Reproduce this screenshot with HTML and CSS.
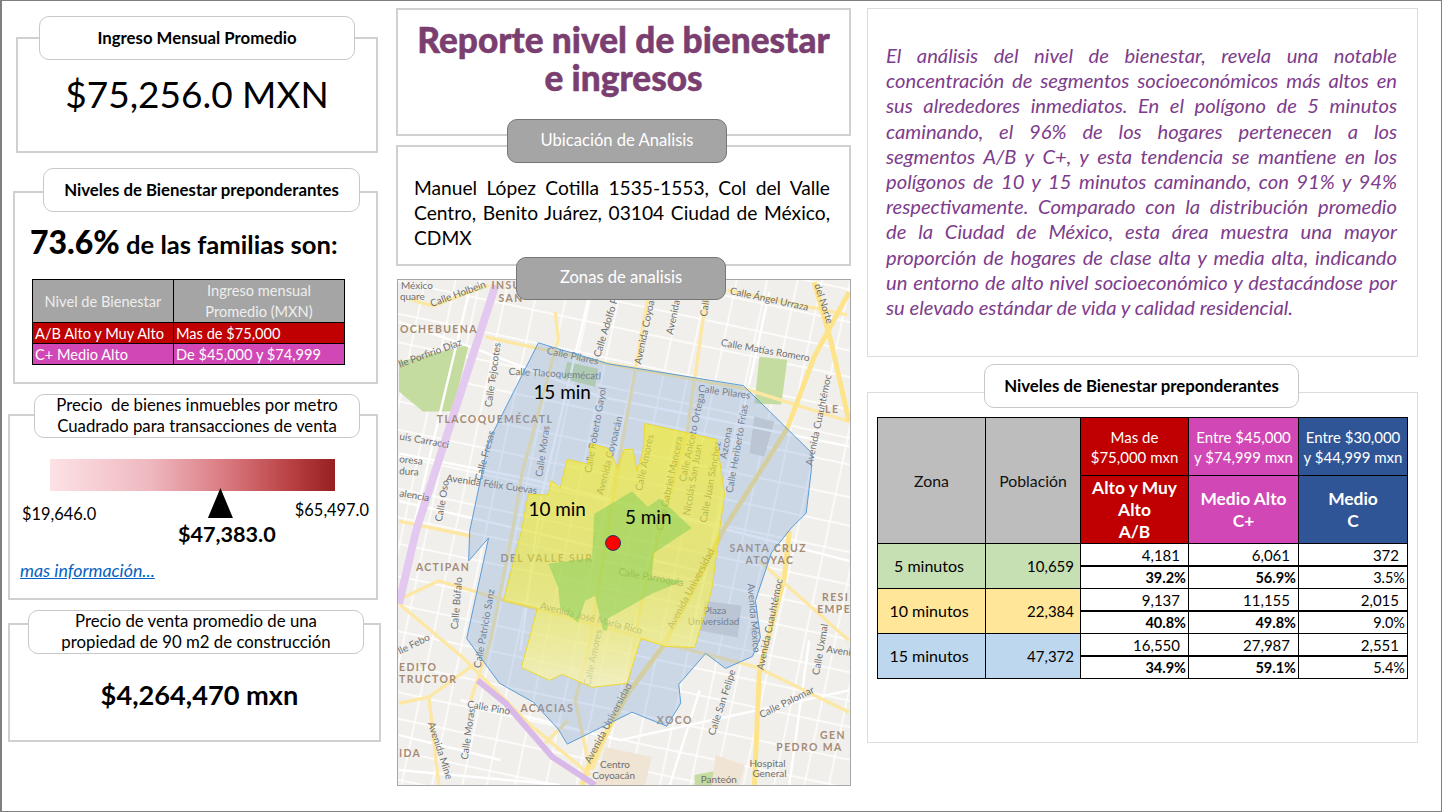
FILE: index.html
```html
<!DOCTYPE html>
<html lang="es">
  <head>
    <meta charset="UTF-8" />
    <title>Reporte nivel de bienestar e ingresos</title>
    <link rel="stylesheet" href="styles.css">
  </head>
  <body>
    <main class="slide">
      <!-- Columna izquierda -->
      <section class="col col-left">
        <div class="panel panel-income">
          <h2 class="pill pill-income">Ingreso Mensual Promedio</h2>
          <p class="income-value">$75,256.0 MXN</p>
        </div>

        <div class="panel panel-levels">
          <h2 class="pill pill-levels">Niveles de Bienestar preponderantes</h2>
          <p class="families"><strong>73.6%</strong> de las familias son:</p>
          <table class="rank-table">
            <tr class="rank-head">
              <th>Nivel de Bienestar</th>
              <th>Ingreso mensual<br>Promedio (MXN)</th>
            </tr>
            <tr class="rank-ab">
              <td>A/B Alto y Muy Alto</td>
              <td>Mas de $75,000</td>
            </tr>
            <tr class="rank-c">
              <td>C+ Medio Alto</td>
              <td>De $45,000 y $74,999</td>
            </tr>
          </table>
        </div>

        <div class="panel panel-scale">
          <h2 class="pill pill-scale pill-plain">Precio &nbsp;de bienes inmuebles por metro<br>Cuadrado para transacciones de venta</h2>
          <div class="scale-bar"></div>
          <div class="scale-labels">
            <span class="scale-min">$19,646.0</span>
            <div class="scale-mid">
              <div class="scale-arrow"></div>
              <strong class="scale-value">$47,383.0</strong>
            </div>
            <span class="scale-max">$65,497.0</span>
          </div>
          <a class="more-link" href="#">mas información...</a>
        </div>

        <div class="panel panel-price">
          <h2 class="pill pill-price pill-plain">Precio de venta promedio de una<br>propiedad de 90 m2 de construcción</h2>
          <p class="price-value">$4,264,470 mxn</p>
        </div>
      </section>

      <!-- Columna central -->
      <section class="col col-center">
        <div class="panel panel-title">
          <h1>Reporte nivel de bienestar<br>e ingresos</h1>
        </div>

        <div class="panel panel-address">
          <h2 class="pill pill-dark pill-location">Ubicación de Analisis</h2>
          <p class="address">
            <span class="line">Manuel López Cotilla 1535-1553, Col del Valle</span>
            <span class="line">Centro, Benito Juárez, 03104 Ciudad de México,</span>
            <span class="line line-last">CDMX</span>
          </p>
        </div>

        <div class="map-block">
          <h2 class="pill pill-dark pill-zones">Zonas de analisis</h2>
          <svg class="map" viewBox="397 278 454 507" width="454" height="507" role="img" aria-label="Mapa de zonas de analisis">
            <defs>
              <pattern id="streets" width="112" height="86" patternUnits="userSpaceOnUse" patternTransform="rotate(12 600 500)">
                <path class="street-grid" d="M0 14H112M0 42H112M0 68H112M16 0V86M46 0V86M76 0V86M100 0V86" />
              </pattern>
              <linearGradient id="yellowFade" x1="0" y1="0" x2="0" y2="1">
                <stop offset="0" stop-color="#fff200" stop-opacity="0.55" />
                <stop offset="0.55" stop-color="#fff200" stop-opacity="0.45" />
                <stop offset="1" stop-color="#fff8b0" stop-opacity="0.7" />
              </linearGradient>
            </defs>

            <rect class="map-base" x="397" y="278" width="454" height="507" />
            <rect fill="url(#streets)" x="397" y="278" width="454" height="507" />

            <!-- parques y manzanas -->
            <polygon class="park" points="398,360 468,343 452,410 422,410 398,390" />
            <polygon class="park" points="760,355 788,358 782,403 755,402" />
            <polygon class="park" points="567,360 598,367 595,385 563,377" />
            <polygon class="park" points="695,775 720,770 725,785 695,785" />
            <polygon class="block" points="705,600 742,605 738,637 700,630" />
            <polygon class="block" points="755,415 775,420 765,455 750,452" />
            <polygon class="beige" points="605,747 652,757 645,785 595,785" />
            <polygon class="beige" points="716,755 745,765 740,785 712,785" />

            <!-- calles blancas -->
            <path class="road-white" d="M398 320 470 345 600 395 850 445M398 452 530 478 850 560M398 500 700 570M470 283 430 450 405 560M590 290 540 500 520 650M770 290 735 450 690 640M810 640 790 785M460 700 620 740 850 690M398 770 560 785M700 690 670 785M398 735 500 760" />

            <!-- vias principales -->
            <path class="road" d="M408 297 432 304 488 283M728 288 848 313M485 335 608 362 745 387 850 420" />
            <path class="road" d="M555 310 558 337 522 470 512 530 490 640 470 700" />
            <path class="road" d="M650 285 618 466 590 640 575 700 590 770" />
            <path class="road" d="M708 285 688 427 642 597 628 683 592 770" />
            <path class="road road-wide" d="M850 290 815 355 788 427 725 527 665 643 628 693 588 767 582 785" />
            <path class="road road-wide" d="M815 280 832 340 850 420" />
            <path class="road road-wide" d="M790 530 785 577 760 670 755 785" />
            <path class="road" d="M402 597 438 580 505 600 642 637 758 667 850 712" />
            <path class="road" d="M398 603 462 657 495 690 530 725 590 775" />
            <path class="road" d="M398 703 428 697 475 663M428 697 438 785M545 743 568 720M398 520 470 535" />
            <path class="road" d="M760 560 850 640" />
            <path class="road-purple" d="M495 283 415 530 398 603" />
            <path class="road-purple road-purple-thin" d="M477 680 505 703 552 757 595 785" />

            <!-- nombres del mapa -->
            <g class="map-street">
              <text x="400" y="287">México</text>
              <text x="399" y="298">quare</text>
              <text x="431" y="305" transform="rotate(-20 431 305)">Calle Holbein</text>
              <text x="399" y="366" transform="rotate(-20 399 366)">lle Porfirio Díaz</text>
              <text x="491" y="406" transform="rotate(-82 491 406)">Calle Tejocotes</text>
              <text x="600" y="356" transform="rotate(-73 600 356)">Calle Adolfo Pr</text>
              <text x="641" y="363" transform="rotate(-78 641 363)">Avenida Coyoacán</text>
              <text x="673" y="333" transform="rotate(-78 673 333)">Avenida</text>
              <text x="707" y="315" transform="rotate(-80 707 315)">Calle</text>
              <text x="508" y="373" transform="rotate(3 508 373)">Calle Tlacoquemécatl</text>
              <text x="546" y="352" transform="rotate(12 546 352)">Calle Pilares</text>
              <text x="698" y="390" transform="rotate(8 698 390)">Calle Pilares</text>
              <text x="721" y="344" transform="rotate(10 721 344)">Calle Matías Romero</text>
              <text x="730" y="292" transform="rotate(12 730 292)">Calle Ángel Urraza</text>
              <text x="815" y="283" transform="rotate(72 815 283)">del Norte</text>
              <text x="813" y="465" transform="rotate(-78 813 465)">Avenida Cuauhtémoc</text>
              <text x="398" y="438" transform="rotate(10 398 438)">uis Carracci</text>
              <text x="398" y="461" transform="rotate(6 398 461)">oresa</text>
              <text x="398" y="473" transform="rotate(4 398 473)">dura</text>
              <text x="398" y="495" transform="rotate(10 398 495)">alencia</text>
              <text x="445" y="480" transform="rotate(8 445 480)">Avenida Félix Cuevas</text>
              <text x="441" y="521" transform="rotate(-80 441 521)">Calle Oso</text>
              <text x="481" y="480" transform="rotate(-75 481 480)">Calle Fresas</text>
              <text x="542" y="476" transform="rotate(-82 542 476)">Calle Moras</text>
              <text x="591" y="472" transform="rotate(-80 591 472)">Calle Roberto Gayol</text>
              <text x="603" y="494" transform="rotate(-76 603 494)">Avenida Coyoacán</text>
              <text x="642" y="490" transform="rotate(-78 642 490)">Calle Amores</text>
              <text x="663" y="530" transform="rotate(-78 663 530)">Calle Gabriel Mancera</text>
              <text x="686" y="481" transform="rotate(-78 686 481)">Calle Aniceto Ortega</text>
              <text x="690" y="515" transform="rotate(-80 690 515)">Nicolás San Juan</text>
              <text x="707" y="522" transform="rotate(-80 707 522)">Calle Juan Sánchez</text>
              <text x="727" y="458" transform="rotate(-80 727 458)">Azcona</text>
              <text x="733" y="492" transform="rotate(-80 733 492)">Calle Heriberto Frías</text>
              <text x="457" y="629" transform="rotate(-85 457 629)">Calle Búfalo</text>
              <text x="480" y="668" transform="rotate(-80 480 668)">Calle Patricio Sanz</text>
              <text x="539" y="608" transform="rotate(14 539 608)">Avenida José María Rico</text>
              <text x="618" y="574" transform="rotate(10 618 574)">Calle Parroquia</text>
              <text x="673" y="629" transform="rotate(-62 673 629)">Avenida Universidad</text>
              <text x="748" y="583" transform="rotate(85 748 583)">Avenida México</text>
              <text x="704" y="613">Plaza</text>
              <text x="688" y="624">Universidad</text>
              <text x="764" y="670" transform="rotate(-78 764 670)">Avenida Cuauhtémoc</text>
              <text x="399" y="654" transform="rotate(-26 399 654)">lle Febo</text>
              <text x="466" y="707" transform="rotate(10 466 707)">Calle Pino</text>
              <text x="467" y="760" transform="rotate(-82 467 760)">Calle Moras</text>
              <text x="590" y="764" transform="rotate(-62 590 764)">Avenida Universidad</text>
              <text x="590" y="686" transform="rotate(-78 590 686)">Calle Amores</text>
              <text x="715" y="736" transform="rotate(-72 715 736)">Calle San Felipe</text>
              <text x="762" y="718" transform="rotate(-26 762 718)">Calle Palomar</text>
              <text x="820" y="675" transform="rotate(-80 820 675)">Calle Uxmal</text>
              <text x="827" y="652" transform="rotate(8 827 652)">Aveni</text>
              <text x="427" y="723" transform="rotate(72 427 723)">Avenida Mine</text>
              <text x="600" y="768">Centro</text>
              <text x="592" y="779">Coyoacán</text>
              <text x="701" y="783">Panteón</text>
              <text x="750" y="767">Hospital</text>
              <text x="753" y="777">General</text>
            </g>
            <g class="map-hood">
              <text x="491" y="287">INSU</text>
              <text x="498" y="300">SAN</text>
              <text x="399" y="331">OCHEBUENA</text>
              <text x="436" y="422">TLACOQUEMÉCATL</text>
              <text x="500" y="561">DEL VALLE SUR</text>
              <text x="415" y="570">ACTIPAN</text>
              <text x="730" y="551">SANTA CRUZ</text>
              <text x="746" y="563">ATOYAC</text>
              <text x="823" y="600">RESI</text>
              <text x="818" y="612">EMPE</text>
              <text x="398" y="671">EDITO</text>
              <text x="398" y="683">TRUCTOR</text>
              <text x="520" y="712">ACACIAS</text>
              <text x="657" y="724">XOCO</text>
              <text x="821" y="739">GEN</text>
              <text x="777" y="751">PEDRO MA</text>
              <text x="398" y="757">IDA</text>
              <text x="826" y="411">LE</text>
            </g>

            <!-- poligonos de caminata -->
            <polygon class="zone-15" points="538,341 608,362 744,384 813,452 812,470 807,512 792,527 772,552 756,600 761,637 753,656 726,668 706,653 679,684 681,703 667,726 632,712 567,744 558,729 533,702 499,683 466,638 488,537 468,560 469,530 488,440" />
            <polygon class="zone-10" points="645,422 717,438 725,493 720,530 712,590 695,647 666,646 641,638 627,683 592,687 562,674 549,680 521,667 537,608 503,600 521,530 528,493 548,494 551,479 560,487 567,458 588,463 591,442 608,447 618,467 624,448 633,448 637,470 643,450" />
            <polygon class="zone-5" points="632,490 648,506 660,497 692,527 654,552 652,577 684,580 652,593 608,618 607,630 603,630 595,595 585,600 578,622 560,608 558,587 548,563 592,557 594,513" />

            <circle class="map-point" cx="613" cy="542" r="7.5" />
            <text class="map-zone" x="533" y="397">15 min</text>
            <text class="map-zone" x="528" y="515">10 min</text>
            <text class="map-zone" x="625" y="523">5 min</text>
          </svg>
        </div>
      </section>

      <!-- Columna derecha -->
      <section class="col col-right">
        <div class="panel panel-text">
          <p class="analysis">
            <span class="line">El análisis del nivel de bienestar, revela una notable</span>
            <span class="line">concentración de segmentos socioeconómicos más altos en</span>
            <span class="line">sus alrededores inmediatos. En el polígono de 5 minutos</span>
            <span class="line">caminando, el 96% de los hogares pertenecen a los</span>
            <span class="line">segmentos A/B y C+, y esta tendencia se mantiene en los</span>
            <span class="line">polígonos de 10 y 15 minutos caminando, con 91% y 94%</span>
            <span class="line">respectivamente. Comparado con la distribución promedio</span>
            <span class="line">de la Ciudad de México, esta área muestra una mayor</span>
            <span class="line">proporción de hogares de clase alta y media alta, indicando</span>
            <span class="line">un entorno de alto nivel socioeconómico y destacándose por</span>
            <span class="line line-last">su elevado estándar de vida y calidad residencial.</span>
          </p>
        </div>

        <div class="panel panel-zones">
          <h2 class="pill pill-zone-table">Niveles de Bienestar preponderantes</h2>
          <table class="zone-table">
            <colgroup>
              <col class="c-zone" /><col class="c-pop" /><col class="c-val" /><col class="c-val2" /><col class="c-val3" />
            </colgroup>
            <tr class="head-price">
              <th class="h-gray" rowspan="2">Zona</th>
              <th class="h-gray" rowspan="2">Población</th>
              <th class="h-red">Mas de<br>$75,000 mxn</th>
              <th class="h-pink">Entre $45,000<br>y $74,999 mxn</th>
              <th class="h-blue">Entre $30,000<br>y $44,999 mxn</th>
            </tr>
            <tr class="head-name">
              <th class="h-red">Alto y Muy<br>Alto<br>A/B</th>
              <th class="h-pink">Medio Alto<br>C+</th>
              <th class="h-blue">Medio<br>C</th>
            </tr>
            <tr class="count">
              <td class="zone z5" rowspan="2">5 minutos</td>
              <td class="pop z5" rowspan="2">10,659</td>
              <td>4,181</td><td>6,061</td><td>372</td>
            </tr>
            <tr class="pct"><td><b>39.2%</b></td><td><b>56.9%</b></td><td>3.5%</td></tr>
            <tr class="count">
              <td class="zone z10" rowspan="2">10 minutos</td>
              <td class="pop z10" rowspan="2">22,384</td>
              <td>9,137</td><td>11,155</td><td>2,015</td>
            </tr>
            <tr class="pct"><td><b>40.8%</b></td><td><b>49.8%</b></td><td>9.0%</td></tr>
            <tr class="count">
              <td class="zone z15" rowspan="2">15 minutos</td>
              <td class="pop z15" rowspan="2">47,372</td>
              <td>16,550</td><td>27,987</td><td>2,551</td>
            </tr>
            <tr class="pct"><td><b>34.9%</b></td><td><b>59.1%</b></td><td>5.4%</td></tr>
          </table>
        </div>
      </section>
    </main>
  </body>
</html>
```

FILE: styles.css
```css
* {
  box-sizing: border-box;
}

body {
  margin: 0;
  background: #fff;
  font-family: "Lato", "Liberation Sans", sans-serif;
  color: #000;
}

h1, h2, p {
  margin: 0;
}

.slide {
  display: flex;
  width: 1442px;
  height: 812px;
  border: 1px solid #7f7f7f;
  border-left-width: 2px;
  overflow: hidden;
}

.col {
  display: flex;
  flex-direction: column;
}

.col-left {
  width: 378px;
  margin-left: 6px;
  padding-top: 36px;
}

.col-center {
  width: 455px;
  margin-left: 10px;
  padding-top: 7px;
}

.col-right {
  width: 552px;
  margin-left: 16px;
  padding-top: 7px;
}

.panel {
  border: 2px solid #d0d0d0;
  background: #fff;
}

/* Lineas justificadas como en el original */
.line {
  display: block;
  white-space: nowrap;
  text-align: justify;
  text-align-last: justify;
}

.line-last {
  text-align-last: left;
}

/* Etiquetas redondeadas */
.pill {
  position: relative;
  z-index: 1;
  display: flex;
  align-items: center;
  justify-content: center;
  height: 44px;
  padding-bottom: 2px;
  text-align: center;
  font-size: 16.8px;
  font-weight: 700;
  line-height: 21px;
  background: #fff;
  border: 1.5px solid #c8c8c8;
  border-radius: 10px;
}

.pill-plain {
  font-weight: 400;
  font-size: 16.8px;
}

.pill-dark {
  font-size: 16.6px;
  font-weight: 400;
  color: #fff;
  background: #a5a5a5;
  border-color: #767676;
}

/* Ingreso */
.panel-income {
  width: 362px;
  height: 116px;
  margin-left: 8px;
}

.pill-income {
  width: 316px;
  margin: -23px 0 0 21px;
}

.income-value {
  margin-top: 9px;
  text-align: center;
  font-size: 37px;
  line-height: 50px;
}

/* Niveles */
.panel-levels {
  width: 365px;
  height: 193px;
  margin: 38px 0 0 5px;
}

.pill-levels {
  width: 317px;
  margin: -25px 0 0 28px;
}

.families {
  margin: 11px 0 0 15px;
  font-size: 25.6px;
  font-weight: 700;
  line-height: 38px;
}

.families strong {
  font-size: 32px;
}

.rank-table {
  width: 313px;
  margin: 16px 0 0 17px;
  border-collapse: collapse;
  table-layout: fixed;
  font-size: 14.6px;
}

.rank-table th, .rank-table td {
  border: 1px solid #000;
  padding: 0 2px;
  color: #fff;
  white-space: nowrap;
}

.rank-table th:first-child, .rank-table td:first-child {
  width: 141px;
}

.rank-head th {
  height: 42px;
  font-weight: 400;
  line-height: 21px;
  color: #eee;
  background: #a5a5a5;
}

.rank-ab td {
  height: 21px;
  background: #c00000;
}

.rank-c td {
  height: 21px;
  background: #d147b5;
}

/* Precio por metro */
.panel-scale {
  width: 370px;
  height: 186px;
  margin-top: 30px;
}

.pill-scale {
  width: 326px;
  margin: -22px 0 0 24px;
}

.scale-bar {
  width: 285px;
  height: 32px;
  margin: 21px 0 0 40px;
  background: linear-gradient(90deg, #fde2e5 0%, #efb8c0 35%, #d9797f 62%, #b83f42 85%, #952020 100%);
}

.scale-labels {
  display: flex;
  align-items: flex-start;
  height: 66px;
  padding: 0 7px 0 12px;
  font-size: 16.4px;
}

.scale-min {
  width: 156px;
  margin-top: 13px;
}

.scale-mid {
  display: flex;
  flex-direction: column;
  align-items: flex-start;
  width: 117px;
}

.scale-arrow {
  width: 25px;
  height: 30px;
  margin: -3px 0 0 30px;
  background: #000;
  clip-path: polygon(50% 0, 100% 100%, 0 100%);
}

.scale-value {
  font-size: 21.6px;
  line-height: 32px;
}

.scale-max {
  margin-top: 9px;
}

.more-link {
  display: block;
  margin: 2px 0 0 10px;
  font-size: 17.8px;
  font-style: italic;
  color: #0563c1;
}

/* Precio promedio */
.panel-price {
  width: 373px;
  height: 119px;
  margin-top: 23px;
}

.pill-price {
  width: 336px;
  margin: -15px 0 0 18px;
}

.price-value {
  margin-top: 23px;
  padding-left: 10px;
  text-align: center;
  font-size: 27.2px;
  font-weight: 700;
  line-height: 36px;
}

/* Titulo */
.panel-title {
  height: 128px;
  padding-top: 10px;
}

.panel-title h1 {
  text-align: center;
  font-size: 35.2px;
  font-weight: 900;
  line-height: 38px;
  color: #7a3f70;
  -webkit-text-stroke: 0.5px #7a3f70;
}

/* Direccion */
.panel-address {
  height: 121px;
  margin-top: 9px;
}

.pill-location {
  width: 220px;
  margin: -28px 0 0 109px;
}

.address {
  padding: 12px 19px 0 16px;
  font-size: 19.2px;
  line-height: 25px;
}

/* Mapa */
.map-block {
  margin-top: 13px;
}

.pill-zones {
  width: 210px;
  height: 43px;
  margin: -22px 0 -21px 120px;
}

.map {
  display: block;
  margin-left: 1px;
  border: 1px solid #a6a6a6;
}

.map-base { fill: #f1efeb; }
.street-grid { fill: none; stroke: #fff; stroke-width: 1.4; }
.park { fill: #c5dca0; }
.block { fill: #d8d5d0; }
.beige { fill: #f0e4d4; }
.road-white { fill: none; stroke: #fff; stroke-width: 2.4; }
.road { fill: none; stroke: #fce8a4; stroke-width: 3.4; }
.road-wide { stroke: #fde48a; stroke-width: 5; }
.road-purple { fill: none; stroke: #e3c9ef; stroke-width: 8; }
.road-purple-thin { stroke: #d9b9e8; stroke-width: 6; }

.map-street text {
  font-size: 10px;
  fill: #6f6f6f;
}

.map-hood text {
  font-size: 10.5px;
  font-weight: 700;
  letter-spacing: 1.4px;
  fill: #a48b76;
}

.zone-15 { fill: #7fa6d9; fill-opacity: 0.32; stroke: #5b9bd5; stroke-width: 1; }
.zone-10 { fill: url(#yellowFade); stroke: #ecd92c; stroke-width: 1; }
.zone-5 { fill: #7ccc55; fill-opacity: 0.48; }
.map-point { fill: #ff0000; stroke: #1f3864; stroke-width: 1; }

.map-zone {
  font-size: 19px;
  fill: #000;
}

/* Texto de analisis */
.panel-text {
  width: 551px;
  height: 349px;
  padding: 34px 20px 0 18px;
  border-width: 1px;
  border-color: #dcdcdc;
}

.analysis {
  font-size: 20.2px;
  font-style: italic;
  line-height: 25.2px;
  color: #7d3c8c;
}

/* Tabla de zonas */
.panel-zones {
  width: 551px;
  height: 351px;
  margin-top: 35px;
  border-width: 1px;
  border-color: #dcdcdc;
}

.pill-zone-table {
  width: 315px;
  margin: -29px 0 0 116px;
}

.zone-table {
  width: 530px;
  margin: 9px 0 0 9px;
  border-collapse: collapse;
  table-layout: fixed;
  font-size: 15px;
}

.c-zone { width: 108px; }
.c-pop { width: 95px; }
.c-val { width: 108px; }
.c-val2 { width: 110px; }
.c-val3 { width: 109px; }

.zone-table th, .zone-table td {
  border: 1px solid #000;
  padding: 0 3px;
  white-space: nowrap;
}

.zone-table th {
  font-weight: 400;
  line-height: 20px;
}

.head-price th {
  height: 58px;
  font-size: 15px;
}

.head-name th {
  height: 68px;
  font-size: 17.4px;
  font-weight: 700;
  line-height: 22px;
}

.head-price .h-gray {
  font-size: 15.8px;
  color: #111;
  background: #bdbdbd;
}

.h-red, .h-pink, .h-blue {
  color: #fff;
}

.h-red { background: #c00000; }
.h-pink { background: #d147b5; }
.h-blue { background: #2f5597; }

.count td, .pct td {
  height: 22.5px;
  padding-top: 0;
  padding-bottom: 0;
  text-align: right;
  line-height: 20px;
}

.count td {
  border-bottom-width: 2px;
  padding-right: 8px;
}

.pct td {
  padding-right: 2px;
  font-size: 14.5px;
}

.zone-table .zone {
  text-align: center;
  font-size: 16px;
  border-bottom-width: 1px;
}

.zone-table .pop {
  padding-right: 6px;
  border-bottom-width: 1px;
}

.z5 { background: #c6e0b4; }
.z10 { background: #ffe699; }
.z15 { background: #bdd7ee; }
```
